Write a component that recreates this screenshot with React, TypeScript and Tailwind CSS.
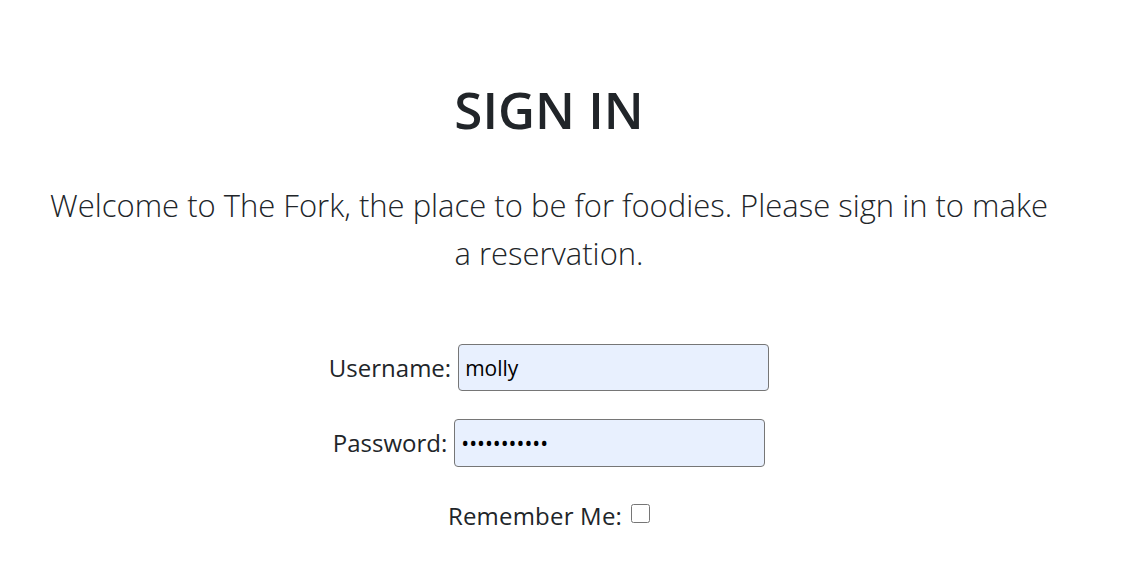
export default function App() {
  return (
    <div className="min-h-[585px] bg-white text-[#212529] font-['Open_Sans',sans-serif]">
      <div className="w-[1098px] flex flex-col items-center pt-[77px]">
        <h1 className="text-[51px] leading-[64px] font-semibold">SIGN IN</h1>
        <p className="w-[1010px] mt-[40px] text-center text-[31px] leading-[48px] font-light">
          Welcome to The Fork, the place to be for foodies. Please sign in to make a reservation.
        </p>
        <form className="mt-[67px] flex flex-col items-center text-[24px]">
          <div className="flex items-center gap-[7px]">
            <label htmlFor="username">Username:</label>
            <input
              id="username"
              type="text"
              defaultValue="molly"
              className="w-[311px] h-[47px] px-[6px] rounded-[4px] border border-[#767676] bg-[#e8f0fe] text-[21px] text-black outline-none"
            />
          </div>
          <div className="flex items-center gap-[7px] mt-[28px]">
            <label htmlFor="password">Password:</label>
            <input
              id="password"
              type="password"
              defaultValue="molly123456"
              className="w-[311px] h-[48px] px-[6px] rounded-[4px] border border-[#767676] bg-[#e8f0fe] text-[21px] text-black outline-none"
            />
          </div>
          <div className="flex items-center gap-[9px] mt-[31px]">
            <label htmlFor="remember" className="tracking-[0.2px]">Remember Me:</label>
            <input id="remember" type="checkbox" className="w-[19px] h-[19px] -mt-[5px]" />
          </div>
        </form>
      </div>
    </div>
  );
}
